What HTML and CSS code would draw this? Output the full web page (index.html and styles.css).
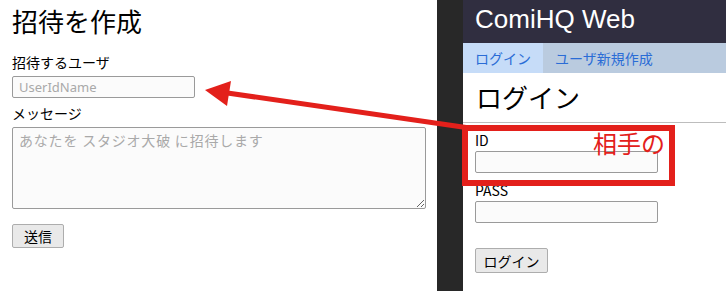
FILE: index.html
```html
<!DOCTYPE html>
<html lang="ja">
<head>
    <meta charset="UTF-8">
    <meta name="viewport" content="width=device-width, initial-scale=1.0">
    <title>招待を作成 - ComiHQ Web</title>
    <link rel="stylesheet" href="styles.css">
</head>
<body>

<div class="screen">
    <!-- 招待フォーム -->
    <section class="invite">
        <h2 class="invite-title">招待を作成</h2>
        <form class="invite-form">
            <label for="invite-user">招待するユーザ</label>
            <input type="text" id="invite-user" class="user-input" placeholder="UserIdName">

            <label for="invite-message">メッセージ</label>
            <textarea id="invite-message" placeholder="あなたを スタジオ大破 に招待します"></textarea>

            <button type="button" class="send-btn">送信</button>
        </form>
    </section>

    <div class="divider"></div>

    <!-- ComiHQ Web ログイン画面 -->
    <section class="app">
        <header class="app-header">ComiHQ Web</header>
        <nav class="app-nav">
            <a href="#" class="active">ログイン</a>
            <a href="#">ユーザ新規作成</a>
        </nav>
        <h1 class="app-title">ログイン</h1>
        <form class="login-form">
            <label for="login-id">ID</label>
            <input type="text" id="login-id">

            <label for="login-pass">PASS</label>
            <input type="password" id="login-pass">

            <button type="button" class="login-btn">ログイン</button>
        </form>
    </section>

    <!-- 注釈 -->
    <svg class="arrow" width="726" height="291" viewBox="0 0 726 291">
        <line x1="466" y1="127.5" x2="224" y2="92.5" stroke="#e3201b" stroke-width="5"/>
        <polygon points="205,90 231,81 227,106" fill="#e3201b"/>
    </svg>
    <div class="callout"></div>
    <span class="callout-text">相手の</span>
</div>

</body>
</html>
```

FILE: styles.css
```css
body {
    margin: 0;
    padding: 0;
    background-color: #fff;
    font-family: "Noto Sans CJK JP", sans-serif;
    color: #000;
}
.screen {
    position: relative;
    width: 726px;
    height: 291px;
    display: flex;
    overflow: hidden;
}

/* 左：招待フォーム */
.invite {
    width: 425px;
    padding: 0 0 0 12px;
}
.invite-title {
    margin: 6px 0 0;
    font-size: 26px;
    line-height: 30px;
    font-weight: normal;
}
.invite-form, .login-form {
    display: flex;
    flex-direction: column;
    align-items: flex-start;
}
.invite-form label {
    font-size: 14px;
    line-height: 18px;
    margin-top: 17px;
    margin-bottom: 5px;
}
.invite-form label + input + label {
    margin-top: 6px;
}
input[type="text"], input[type="password"], textarea {
    box-sizing: border-box;
    width: 183px;
    height: 22px;
    margin: 0;
    padding: 1px 6px;
    border: 1px solid #9a9a9a;
    border-radius: 2px;
    background-color: #fbfbfb;
    font-family: "Noto Sans", "Noto Sans CJK JP", sans-serif;
    font-size: 13px;
}
::placeholder {
    color: #a9a9a9;
}
textarea {
    width: 414px;
    height: 82px;
    padding: 3px 6px;
    font-family: "Noto Sans CJK JP", sans-serif;
    font-size: 14px;
    line-height: 18px;
    letter-spacing: 0.8px;
    resize: both;
}
button {
    box-sizing: border-box;
    height: 24px;
    padding: 0;
    white-space: nowrap;
    background-color: #e9e9e9;
    border: 1px solid #adadad;
    border-radius: 2px;
    font-family: "Noto Sans CJK JP", sans-serif;
    font-size: 14px;
    line-height: 20px;
    color: #000;
}
.send-btn {
    width: 52px;
    margin-top: 15px;
}

/* 中央の区切り */
.divider {
    width: 26px;
    background-color: #282828;
}

/* 右：ComiHQ Web */
.app {
    flex: 1;
}
.app-header {
    height: 43px;
    box-sizing: border-box;
    padding: 0 0 4px 12px;
    background-color: #302e40;
    color: #fff;
    font-family: "Liberation Sans", sans-serif;
    font-size: 26px;
    line-height: 39px;
}
.app-nav {
    display: flex;
    height: 30px;
    background-color: #bacbdf;
}
.app-nav a {
    padding: 0 12px;
    font-size: 14px;
    line-height: 30px;
    color: #2a6cd6;
    text-decoration: none;
}
.app-nav a.active {
    background-color: #c6dcf8;
}
.app-title {
    margin: 7px 0 0;
    padding: 0 0 8px 13px;
    border-bottom: 1px solid #bdbdbd;
    font-size: 26px;
    line-height: 34px;
    font-weight: normal;
}
.login-form {
    padding-left: 12px;
}
.login-form label {
    font-size: 14px;
    line-height: 18px;
    margin-top: 8px;
    margin-bottom: 2px;
}
.login-form label:first-child {
    margin-top: 8px;
}
.login-btn {
    width: 73px;
    height: 25px;
    margin-top: 25px;
}

/* 注釈（赤枠と矢印） */
.arrow {
    position: absolute;
    left: 0;
    top: 0;
    pointer-events: none;
}
.callout {
    position: absolute;
    left: 462px;
    top: 125px;
    width: 213px;
    height: 61px;
    box-sizing: border-box;
    border: 6px solid #e3201b;
}
.callout-text {
    position: absolute;
    left: 593px;
    top: 128px;
    font-size: 24px;
    line-height: 30px;
    color: #e3201b;
}
```
